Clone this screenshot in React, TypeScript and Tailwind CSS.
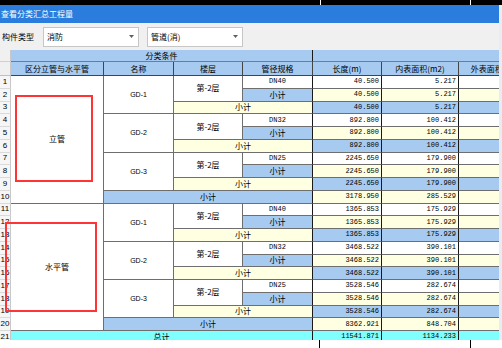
import React from 'react';
import clsx from 'clsx';

const CJK = "font-['Noto_Sans_CJK_SC',sans-serif]";
const MONO = "font-['Liberation_Mono',monospace]";
const BLUE = 'bg-[#a6caf0]';
const YELLOW = 'bg-[#ffffe1]';
const CYAN = 'bg-[#80ffff]';

type Item = { name: string; spec: string; len: string; area: string };
type Group = { label: string; items: Item[]; sub: [string, string] };

const groups: Group[] = [
  {
    label: '立管',
    items: [
      { name: 'GD-1', spec: 'DN40', len: '40.500', area: '5.217' },
      { name: 'GD-2', spec: 'DN32', len: '892.800', area: '100.412' },
      { name: 'GD-3', spec: 'DN25', len: '2245.650', area: '179.900' },
    ],
    sub: ['3178.950', '285.529'],
  },
  {
    label: '水平管',
    items: [
      { name: 'GD-1', spec: 'DN40', len: '1365.853', area: '175.929' },
      { name: 'GD-2', spec: 'DN32', len: '3468.522', area: '390.101' },
      { name: 'GD-3', spec: 'DN25', len: '3528.546', area: '282.674' },
    ],
    sub: ['8362.921', '848.704'],
  },
];

const Cell: React.FC<{ className?: string; children?: React.ReactNode }> = ({ className, children }) => (
  <div
    className={clsx(
      'flex items-center overflow-hidden whitespace-nowrap border-r border-b border-[#6e6e6e] leading-none text-black',
      className
    )}
  >
    {children}
  </div>
);

const Select: React.FC<{ value: string; className?: string }> = ({ value, className }) => (
  <div
    className={clsx(
      'flex h-[20px] w-[96px] items-center justify-between border border-[#c6c6c6] bg-white pl-[3px] pr-[4px]',
      className
    )}
  >
    <span className={clsx(CJK, 'text-[8px] leading-none text-black')}>{value}</span>
    <svg width="5" height="3" viewBox="0 0 5 3">
      <path d="M0 0h5L2.5 3z" fill="#606060" />
    </svg>
  </div>
);

function buildRows() {
  const cells: React.ReactNode[] = [];
  let n = 0;
  const rowNum = () => {
    n++;
    cells.push(
      <Cell
        key={`rn${n}`}
        className="col-start-1 justify-center border-r-[#c8c8c8] border-b-[#dadada] bg-[#f6f6f6] font-['Liberation_Sans',sans-serif] text-[8px] text-[#222]"
      >
        {n}
      </Cell>
    );
  };
  const values = (key: string, len: string, area: string, bg: string) => {
    cells.push(
      <Cell key={`${key}e`} className={clsx('col-start-6 justify-end border-r-[#1a1a1a] pr-[2px] text-[7px]', MONO, bg)}>
        {len}
      </Cell>,
      <Cell key={`${key}f`} className={clsx('col-start-7 justify-end border-r-[#1a1a1a] pr-[2px] text-[7px]', MONO, bg)}>
        {area}
      </Cell>,
      <Cell key={`${key}g`} className={clsx('col-start-8', bg)} />
    );
  };

  groups.forEach((g, gi) => {
    g.items.forEach((it, ii) => {
      const k = `${gi}-${ii}`;
      rowNum();
      if (ii === 0) {
        cells.push(
          <Cell key={`${gi}a`} className={clsx('col-start-2 row-span-10 justify-center bg-white text-[8px]', CJK)}>
            {g.label}
          </Cell>
        );
      }
      cells.push(
        <Cell
          key={`${k}b`}
          className="col-start-3 row-span-3 justify-center bg-white font-['Liberation_Sans',sans-serif] text-[7px] text-[#333]"
        >
          {it.name}
        </Cell>,
        <Cell key={`${k}c`} className={clsx('col-start-4 row-span-2 justify-center bg-white text-[8px]', CJK)}>
          第-2层
        </Cell>,
        <Cell key={`${k}d`} className={clsx('col-start-5 justify-center border-r-[#1a1a1a] bg-white text-[7px]', MONO)}>
          {it.spec}
        </Cell>
      );
      values(`${k}1`, it.len, it.area, 'bg-white');

      rowNum();
      cells.push(
        <Cell key={`${k}d2`} className={clsx('col-start-5 justify-center border-r-[#1a1a1a] text-[8px]', CJK, BLUE)}>
          小计
        </Cell>
      );
      values(`${k}2`, it.len, it.area, YELLOW);

      rowNum();
      cells.push(
        <Cell key={`${k}cd`} className={clsx('col-start-4 col-span-2 justify-center border-r-[#1a1a1a] text-[8px]', CJK, YELLOW)}>
          小计
        </Cell>
      );
      values(`${k}3`, it.len, it.area, BLUE);
    });

    rowNum();
    cells.push(
      <Cell key={`${gi}bd`} className={clsx('col-start-3 col-span-3 justify-center border-r-[#1a1a1a] text-[8px]', CJK, BLUE)}>
        小计
      </Cell>
    );
    values(`${gi}s`, g.sub[0], g.sub[1], YELLOW);
  });

  rowNum();
  cells.push(
    <Cell key="tot" className={clsx('col-start-2 col-span-4 justify-center border-r-[#1a1a1a] text-[8px]', CJK, CYAN)}>
      总计
    </Cell>
  );
  values('tot', '11541.871', '1134.233', CYAN);
  return cells;
}

export default function App() {
  const head = clsx('justify-center text-[8px] border-r-[#444] border-b-[#444]', CJK, BLUE);
  return (
    <div className="relative h-[348px] w-[502px] overflow-hidden bg-white">
      <div className="flex h-[5px] bg-black">
        <div className="w-[320px]" />
        <div className="w-px bg-white" />
        <div className="w-[149px]" />
        <div className="w-px bg-white" />
      </div>

      <div className="flex h-[335px]">
        <div className="flex w-[499px] flex-col">
          <div className="flex h-[18px] items-center bg-[#2a7ddc] pl-[1px]">
            <span className={clsx(CJK, 'text-[8px] leading-none text-white')}>查看分类汇总工程量</span>
          </div>

          <div className="flex h-[27px] items-center bg-[#f0f0f0] pl-[2px]">
            <span className={clsx(CJK, 'text-[8px] leading-none text-black')}>构件类型</span>
            <Select value="消防" className="ml-[9px]" />
            <Select value="管道(消)" className="ml-[8px]" />
          </div>

          <div className="h-[290px] overflow-hidden">
            <div className="grid w-[533px] grid-cols-[11px_93px_70px_69px_70px_69px_77px_74px] grid-rows-[12px_14px_repeat(21,12.75px)]">
              <Cell className="col-start-1 border-r-[#c8c8c8] border-b-[#d0d0d0] bg-[#f0f0f0]" />
              <Cell className={clsx('col-start-2 col-span-4 justify-center border-r-[#1a1a1a] border-b-[#7a7a7a] text-[8px]', CJK, BLUE)}>
                分类条件
              </Cell>
              <Cell className={clsx('col-start-6 col-span-3 border-b-[#7a7a7a]', BLUE)} />

              <Cell className="col-start-1 border-r-[#c8c8c8] border-b-[#c0c0c0] bg-[#f0f0f0]" />
              <Cell className={clsx('col-start-2', head)}>区分立管与水平管</Cell>
              <Cell className={clsx('col-start-3', head)}>名称</Cell>
              <Cell className={clsx('col-start-4', head)}>楼层</Cell>
              <Cell className={clsx('col-start-5 border-r-[#1a1a1a]', head)}>管径规格</Cell>
              <Cell className={clsx('col-start-6 border-r-[#1a1a1a]', head)}>长度(m)</Cell>
              <Cell className={clsx('col-start-7 border-r-[#1a1a1a]', head)}>内表面积(m2)</Cell>
              <Cell className={clsx('col-start-8', head)}>外表面积(m2)</Cell>

              {buildRows()}
            </div>
          </div>
        </div>
        <div className="w-[3px] bg-[#e9edf2]" />
      </div>

      <div className="flex h-[8px] bg-white">
        <div className="w-[319px]" />
        <div className="w-px bg-black" />
        <div className="w-[150px]" />
        <div className="w-px bg-black" />
      </div>

      <div className="absolute left-[15px] top-[95px] h-[87px] w-[78px] border-2 border-[#ff3535]" />
      <div className="absolute left-[5px] top-[222px] h-[90px] w-[92px] border-2 border-[#ff3535]" />
    </div>
  );
}
